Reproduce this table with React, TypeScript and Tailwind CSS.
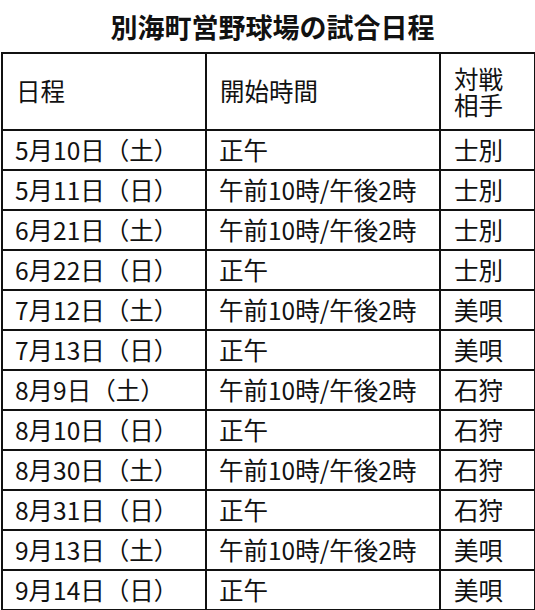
const rows: [string, string, string][] = [
  ["5月10日（土）", "正午", "士別"],
  ["5月11日（日）", "午前10時/午後2時", "士別"],
  ["6月21日（土）", "午前10時/午後2時", "士別"],
  ["6月22日（日）", "正午", "士別"],
  ["7月12日（土）", "午前10時/午後2時", "美唄"],
  ["7月13日（日）", "正午", "美唄"],
  ["8月9日（土）", "午前10時/午後2時", "石狩"],
  ["8月10日（日）", "正午", "石狩"],
  ["8月30日（土）", "午前10時/午後2時", "石狩"],
  ["8月31日（日）", "正午", "石狩"],
  ["9月13日（土）", "午前10時/午後2時", "美唄"],
  ["9月14日（日）", "正午", "美唄"],
]

export default function App() {
  return (
    <div className="w-[535px] h-[610px] bg-white text-[#111] font-['Noto_Sans_CJK_JP','Noto_Sans',sans-serif]">
      <h1 className="h-[52px] flex items-center justify-center pl-[10px] text-[27px] font-bold leading-none">
        別海町営野球場の試合日程
      </h1>
      <table className="ml-[1px] w-[533px] border-collapse table-fixed text-[24.5px]">
        <colgroup>
          <col className="w-[204px]" />
          <col className="w-[234px]" />
          <col className="w-[95px]" />
        </colgroup>
        <thead>
          <tr className="h-[77px]">
            <th className="border-2 border-[#111] px-[13px] text-left font-normal">日程</th>
            <th className="border-2 border-[#111] px-[13px] text-left font-normal">開始時間</th>
            <th className="border-2 border-[#111] px-[13px] text-left font-normal">
              <div className="leading-[26px]">対戦</div>
              <div className="leading-[26px]">相手</div>
            </th>
          </tr>
        </thead>
        <tbody>
          {rows.map(([date, time, team]) => (
            <tr key={date} className="h-[40px]">
              <td className="border-2 border-[#111] px-[12px] leading-none whitespace-nowrap">{date}</td>
              <td className="border-2 border-[#111] px-[12px] leading-none whitespace-nowrap">{time}</td>
              <td className="border-2 border-[#111] px-[13px] leading-none whitespace-nowrap">{team}</td>
            </tr>
          ))}
        </tbody>
      </table>
    </div>
  )
}
